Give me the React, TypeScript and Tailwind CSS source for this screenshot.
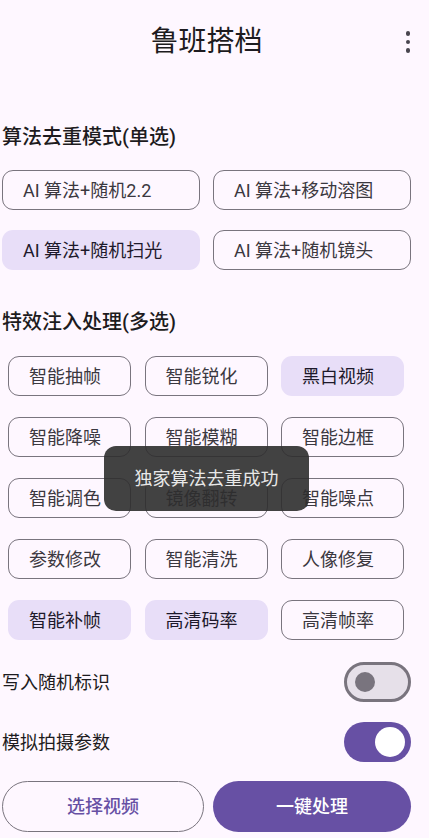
import React from "react";

const FONT = { fontFamily: '"Roboto", "Noto Sans CJK SC", sans-serif' };

const modes = [
  { label: "AI 算法+随机2.2", on: false },
  { label: "AI 算法+移动溶图", on: false },
  { label: "AI 算法+随机扫光", on: true },
  { label: "AI 算法+随机镜头", on: false },
];

const effects = [
  { label: "智能抽帧", on: false },
  { label: "智能锐化", on: false },
  { label: "黑白视频", on: true },
  { label: "智能降噪", on: false },
  { label: "智能模糊", on: false },
  { label: "智能边框", on: false },
  { label: "智能调色", on: false },
  { label: "镜像翻转", on: false },
  { label: "智能噪点", on: false },
  { label: "参数修改", on: false },
  { label: "智能清洗", on: false },
  { label: "人像修复", on: false },
  { label: "智能补帧", on: true },
  { label: "高清码率", on: true },
  { label: "高清帧率", on: false },
];

function Chip({ label, on }: { label: string; on: boolean }) {
  return (
    <div
      className={
        on
          ? "h-[40px] flex items-center pl-[21px] rounded-[11px] bg-[#e8def8] text-[#1d192b] text-[18px] whitespace-nowrap"
          : "h-[40px] flex items-center pl-[20px] rounded-[11px] border border-[#79747e] text-[#3b3840] text-[18px] whitespace-nowrap"
      }
    >
      {label}
    </div>
  );
}

function Toggle({ on }: { on: boolean }) {
  if (on) {
    return (
      <div className="w-[67px] h-[40px] rounded-full bg-[#6750a4] flex items-center justify-end pr-[6px]">
        <div className="w-[30px] h-[30px] rounded-full bg-white" />
      </div>
    );
  }
  return (
    <div className="w-[67px] h-[40px] rounded-full bg-[#e6e0e9] border-[3px] border-[#79747e] flex items-center pl-[8px]">
      <div className="w-[20px] h-[20px] rounded-full bg-[#79747e]" />
    </div>
  );
}

export default function App() {
  return (
    <div className="relative w-[429px] h-[838px] overflow-hidden bg-[#fef7ff] text-[#1d1b20]" style={FONT}>
      <div className="relative h-[84px] flex items-center justify-center pr-[16px]">
        <span className="text-[28px] leading-none">鲁班搭档</span>
        <div className="absolute right-[19px] top-[31px] flex flex-col gap-[4px]">
          <span className="w-[4.5px] h-[4.5px] rounded-full bg-[#49454f]" />
          <span className="w-[4.5px] h-[4.5px] rounded-full bg-[#49454f]" />
          <span className="w-[4.5px] h-[4.5px] rounded-full bg-[#49454f]" />
        </div>
      </div>

      <h2 className="mt-[39px] pl-[2px] h-[28px] text-[20px] leading-[28px] font-medium">算法去重模式(单选)</h2>
      <div className="mt-[19px] pl-[2px] w-[411px] grid grid-cols-2 gap-x-[13px] gap-y-[20px]">
        {modes.map((m) => (
          <Chip key={m.label} {...m} />
        ))}
      </div>

      <h2 className="mt-[38px] pl-[2px] h-[28px] text-[20px] leading-[28px] font-medium">特效注入处理(多选)</h2>
      <div className="mt-[20px] ml-[8px] w-[396px] grid grid-cols-3 gap-x-[13.5px] gap-y-[21px]">
        {effects.map((e) => (
          <Chip key={e.label} {...e} />
        ))}
      </div>

      <div className="mt-[22px] pl-[2px] w-[411px] flex items-center justify-between">
        <span className="text-[18px]">写入随机标识</span>
        <Toggle on={false} />
      </div>
      <div className="mt-[20px] pl-[2px] w-[411px] flex items-center justify-between">
        <span className="text-[18px]">模拟拍摄参数</span>
        <Toggle on={true} />
      </div>

      <div className="mt-[19px] pl-[2px] w-[411px] flex gap-[9px]">
        <button className="w-[202px] h-[51px] rounded-full border border-[#79747e] text-[#6750a4] text-[18px] font-medium">
          选择视频
        </button>
        <button className="w-[198px] h-[51px] rounded-full bg-[#6750a4] text-white text-[18px] font-medium">
          一键处理
        </button>
      </div>

      <div className="absolute left-[104px] top-[446px] w-[205px] h-[65px] rounded-[12px] bg-[#2e2e2e]/90 flex items-center justify-center">
        <span className="text-[18px] text-[#e8e8e8]">独家算法去重成功</span>
      </div>
    </div>
  );
}
